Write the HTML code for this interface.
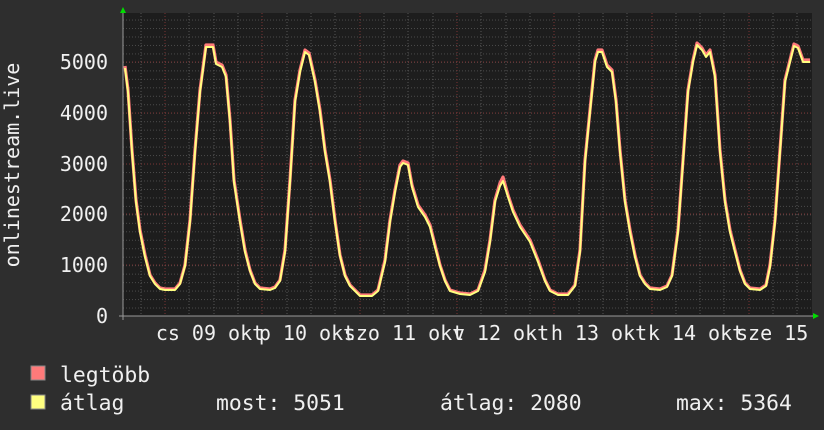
<!DOCTYPE html>
<html><head><meta charset="utf-8"><style>
html,body{margin:0;padding:0;background:#2e2e2e;width:824px;height:430px;overflow:hidden}
svg{display:block}
text{font-family:"DejaVu Sans Mono","Liberation Mono",monospace;font-size:20px;fill:#f0f0f0}
.lg{font-size:21.4px}
</style></head><body>
<svg width="824" height="430" viewBox="0 0 824 430" xmlns="http://www.w3.org/2000/svg">
<defs>
<pattern id="hm" width="689" height="8.47" patternUnits="userSpaceOnUse" x="123" y="316">
<line x1="0" y1="0.5" x2="689" y2="0.5" stroke="#4a4a4a" stroke-dasharray="1,2"/>
</pattern>
<clipPath id="pc"><rect x="123" y="13" width="689" height="303"/></clipPath>
</defs>
<rect x="123" y="13" width="689" height="303" fill="#1d1d1d"/>
<rect x="123" y="13" width="689" height="303" fill="url(#hm)"/>
<g stroke="#555" stroke-dasharray="1,2">
<line x1="141" y1="13" x2="141" y2="316"/><line x1="189" y1="13" x2="189" y2="316"/><line x1="214" y1="13" x2="214" y2="316"/><line x1="238" y1="13" x2="238" y2="316"/>
<line x1="287" y1="13" x2="287" y2="316"/><line x1="311" y1="13" x2="311" y2="316"/><line x1="335" y1="13" x2="335" y2="316"/>
<line x1="384" y1="13" x2="384" y2="316"/><line x1="408" y1="13" x2="408" y2="316"/><line x1="433" y1="13" x2="433" y2="316"/>
<line x1="481" y1="13" x2="481" y2="316"/><line x1="506" y1="13" x2="506" y2="316"/><line x1="530" y1="13" x2="530" y2="316"/>
<line x1="579" y1="13" x2="579" y2="316"/><line x1="603" y1="13" x2="603" y2="316"/><line x1="627" y1="13" x2="627" y2="316"/>
<line x1="676" y1="13" x2="676" y2="316"/><line x1="700" y1="13" x2="700" y2="316"/><line x1="724" y1="13" x2="724" y2="316"/>
<line x1="773" y1="13" x2="773" y2="316"/><line x1="797" y1="13" x2="797" y2="316"/>
</g>
<g stroke="#7a3434" stroke-dasharray="1,2">
<line x1="165" y1="13" x2="165" y2="316"/><line x1="262" y1="13" x2="262" y2="316"/><line x1="360" y1="13" x2="360" y2="316"/><line x1="457" y1="13" x2="457" y2="316"/><line x1="554" y1="13" x2="554" y2="316"/><line x1="652" y1="13" x2="652" y2="316"/><line x1="749" y1="13" x2="749" y2="316"/>
<line x1="123" y1="62" x2="812" y2="62"/><line x1="123" y1="113" x2="812" y2="113"/><line x1="123" y1="164" x2="812" y2="164"/><line x1="123" y1="214" x2="812" y2="214"/><line x1="123" y1="265" x2="812" y2="265"/>
</g>
<g clip-path="url(#pc)" fill="none" stroke-linejoin="round">
<polyline stroke="#ff7a7a" stroke-width="3.2" points="125,66 128,90 132,150 136,200 140,230 145,255 150,275 155,283 160,288 165,289 170,289 175,289 180,283 185,265 190,220 195,150 200,90 204,60 206,45 213,45 216,62 222,65 226,75 230,120 234,180 240,220 245,250 250,270 255,283 260,288 270,289 275,287 280,280 285,250 290,180 295,100 300,70 305,50 309,53 315,80 320,110 325,150 330,180 335,220 340,255 345,275 350,285 355,290 360,295 365,295 372,295 378,290 385,260 390,220 395,190 400,165 403,161 408,163 412,185 418,205 425,215 430,225 435,245 440,265 445,280 450,290 460,293 470,294 478,290 485,270 490,240 495,200 500,183 503,177 508,195 513,210 520,225 530,240 538,260 545,280 550,290 558,294 568,294 575,285 580,250 585,160 590,110 595,60 598,50 602,50 607,65 612,70 616,100 620,150 625,200 630,230 635,255 640,275 645,283 650,288 660,289 667,286 672,275 678,230 683,160 688,90 693,60 697,43 702,48 706,55 710,50 715,75 720,150 725,200 730,230 735,250 740,270 745,283 750,288 760,289 766,285 770,265 775,220 780,150 785,80 790,60 794,44 798,46 803,60 810,60"/>
<polyline stroke="#ffff80" stroke-width="2" points="125,68 128,92 132,152 136,202 140,232 145,257 150,276 155,284 160,289 165,290 170,290 175,290 180,284 185,266 190,222 195,152 200,92 204,62 206,47 213,47 216,64 222,67 226,77 230,122 234,182 240,222 245,252 250,271 255,284 260,289 270,290 275,288 280,281 285,252 290,182 295,102 300,72 305,52 309,55 315,82 320,112 325,152 330,182 335,222 340,256 345,276 350,286 355,291 360,296 365,296 372,296 378,291 385,262 390,222 395,192 400,167 403,163 408,165 412,187 418,207 425,217 430,227 435,247 440,266 445,281 450,291 460,294 470,295 478,291 485,272 490,242 495,202 500,186 503,181 508,197 513,212 520,227 530,242 538,262 545,281 550,291 558,295 568,295 575,286 580,252 585,162 590,112 595,62 598,52 602,52 607,67 612,72 616,102 620,152 625,202 630,232 635,257 640,276 645,284 650,289 660,290 667,287 672,276 678,232 683,162 688,92 693,62 697,45 702,50 706,57 710,52 715,77 720,152 725,202 730,232 735,252 740,271 745,284 750,289 760,290 766,286 770,267 775,222 780,152 785,82 790,62 794,46 798,48 803,62 810,62"/>
</g>
<line x1="119" y1="316" x2="814" y2="316" stroke="#999"/>
<line x1="123" y1="12" x2="123" y2="320" stroke="#999"/>
<polygon points="120,13 126,13 123,7" fill="#00dd00"/>
<polygon points="813,313 813,319 819,316" fill="#00dd00"/>
<g text-anchor="end">
<text x="108" y="323">0</text><text x="108" y="272">1000</text><text x="108" y="221">2000</text><text x="108" y="171">3000</text><text x="108" y="120">4000</text><text x="108" y="69">5000</text>
</g>
<text transform="translate(19,165) rotate(-90)" text-anchor="middle">onlinestream.live</text>
<g text-anchor="middle">
<text x="210" y="340">cs 09 okt</text>
<text x="307" y="340">p 10 okt</text>
<text x="404" y="340">szo 11 okt</text>
<text x="501" y="340">v 12 okt</text>
<text x="599" y="340">h 13 okt</text>
<text x="696" y="340">k 14 okt</text>
</g>
<text x="736" y="340">sze 15</text>
<rect x="31" y="366" width="14" height="14" fill="#ff7a7a" stroke="#888"/>
<rect x="31" y="395" width="14" height="14" fill="#ffff80" stroke="#888"/>
<text class="lg" x="60" y="382">legtöbb</text>
<text class="lg" x="60" y="410">átlag</text>
<text class="lg" x="216" y="410">most: 5051</text>
<text class="lg" x="440" y="410">átlag: 2080</text>
<text class="lg" x="676" y="410">max: 5364</text>
</svg>
</body></html>
